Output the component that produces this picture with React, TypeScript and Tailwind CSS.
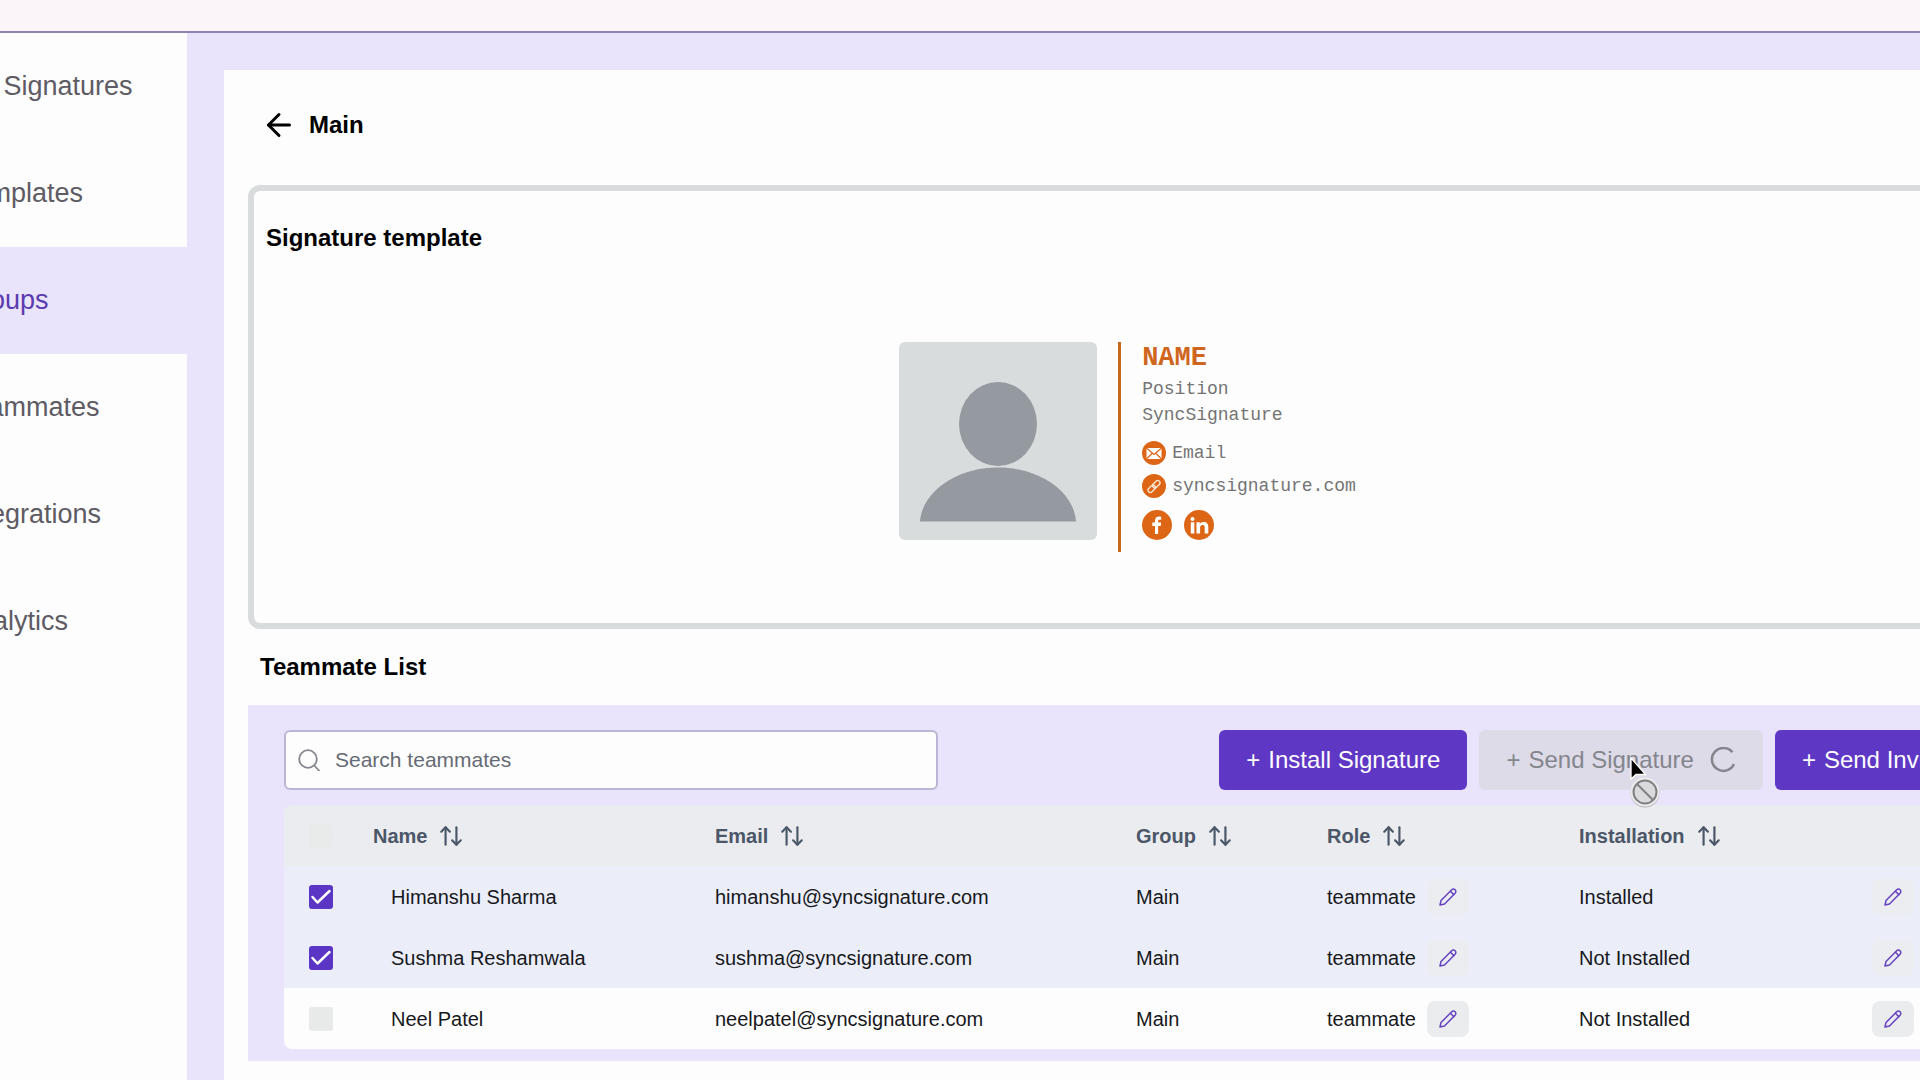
import { ArrowLeft, ArrowUpDown } from "lucide-react"

const navItems = [
  { name: "My Signatures", href: "#signatures", active: false },
  { name: "Templates", href: "#templates", active: false },
  { name: "Groups", href: "#groups", active: true },
  { name: "Teammates", href: "#teammates", active: false },
  { name: "Integrations", href: "#integrations", active: false },
  { name: "Analytics", href: "#analytics", active: false },
]

const columns = [
  { name: "Name", width: "w-[342px]" },
  { name: "Email", width: "w-[421px]" },
  { name: "Group", width: "w-[191px]" },
  { name: "Role", width: "w-[252px]" },
  { name: "Installation", width: "w-[293px]" },
]

const teammates = [
  { name: "Himanshu Sharma", email: "himanshu@syncsignature.com", group: "Main", role: "teammate", status: "Installed", selected: true },
  { name: "Sushma Reshamwala", email: "sushma@syncsignature.com", group: "Main", role: "teammate", status: "Not Installed", selected: true },
  { name: "Neel Patel", email: "neelpatel@syncsignature.com", group: "Main", role: "teammate", status: "Not Installed", selected: false },
]

function Sidebar() {
  return (
    <aside className="w-[187px] shrink-0 overflow-hidden bg-[#fdfdfd]">
      <nav className="-ml-10">
        {navItems.map((item) => (
          <a
            key={item.name}
            href={item.href}
            className={
              item.active
                ? "flex h-[107px] items-center whitespace-nowrap bg-[#e9e3fb] text-[27px] text-[#5b3bb0]"
                : "flex h-[107px] items-center whitespace-nowrap text-[27px] text-[#5e5b64]"
            }
          >
            {item.name}
          </a>
        ))}
      </nav>
    </aside>
  )
}

function Avatar() {
  return (
    <svg viewBox="0 0 198 198" className="size-[198px] shrink-0 rounded-md bg-[#d9dcdd]" aria-hidden="true">
      <ellipse cx="99" cy="82" rx="39" ry="42" fill="#9599a0" />
      <path d="M21 179.500C23 150 57 125.500 99 125.500s76 24.500 78 54z" fill="#9599a0" />
    </svg>
  )
}

function EmailIcon() {
  return (
    <svg viewBox="0 0 24 24" className="size-6" aria-hidden="true">
      <circle cx="12" cy="12" r="12" fill="#dc6516" />
      <rect x="4.500" y="7" width="15" height="11" rx="1.500" fill="#fff" />
      <path d="M5 7.500l7 6 7-6M5 17.500l5-5M19 17.500l-5-5" fill="none" stroke="#dc6516" strokeWidth="1.200" />
    </svg>
  )
}

function LinkIcon() {
  return (
    <svg viewBox="0 0 24 24" className="size-6" aria-hidden="true">
      <circle cx="12" cy="12" r="12" fill="#dc6516" />
      <g transform="rotate(-45 12 12.500)" fill="none" stroke="#ffe9d6" strokeWidth="1.300">
        <rect x="4.500" y="10.200" width="8.500" height="4.600" rx="2.300" />
        <rect x="11" y="10.200" width="8.500" height="4.600" rx="2.300" />
      </g>
    </svg>
  )
}

function SignatureCard() {
  return (
    <div className="flex items-start">
      <Avatar />
      <div className="ml-[21px] h-[210px] w-[3px] bg-[#c56a1d]" />
      <div className="ml-[21px] font-['Liberation_Mono',monospace] text-[18px] text-[#747474]">
        <p className="pt-[2px] text-[27px] leading-[28px] font-bold text-[#d0661d]">NAME</p>
        <p className="mt-1 leading-[26px]">Position</p>
        <p className="leading-[26px]">SyncSignature</p>
        <p className="mt-[13px] flex items-center gap-[6px] leading-[24px]">
          <EmailIcon />
          Email
        </p>
        <p className="mt-[9px] flex items-center gap-[6px] leading-[24px]">
          <LinkIcon />
          syncsignature.com
        </p>
        <div className="mt-3 flex gap-3">
          <a href="#facebook" aria-label="Facebook">
            <svg viewBox="0 0 30 30" className="size-[30px]">
              <circle cx="15" cy="15" r="15" fill="#dc6516" />
              <path d="M13 24v-8h-2.700v-3.400H13v-2.200C13 7.700 14.600 6.500 17 6.500c.9 0 1.700.1 2.200.2v3h-1.600c-1.100 0-1.500.6-1.500 1.400v1.500h3l-.4 3.400h-2.600v8z" fill="#fff" />
            </svg>
          </a>
          <a href="#linkedin" aria-label="LinkedIn">
            <svg viewBox="0 0 30 30" className="size-[30px]">
              <circle cx="15" cy="15" r="15" fill="#dc6516" />
              <circle cx="8.500" cy="9" r="2" fill="#fff" />
              <path d="M6.800 12.300h3.500V23.500H6.800zM12.500 12.300h3.300v1.600c.7-1.200 1.900-1.900 3.600-1.900 3.700 0 4.900 2.100 4.900 5.100v6.400h-3.600v-5.800c0-1.700-.4-2.700-2-2.700-1.800 0-2.600 1-2.600 2.700v5.800h-3.600z" fill="#fff" />
            </svg>
          </a>
        </div>
      </div>
    </div>
  )
}

function EditButton({ label, faded }: { label: string; faded: boolean }) {
  return (
    <button
      aria-label={label}
      className={
        faded
          ? "flex h-9 w-[42px] items-center justify-center rounded-lg bg-[#ecedf1]"
          : "flex h-9 w-[42px] items-center justify-center rounded-lg bg-[#ebecee]"
      }
    >
      <svg viewBox="0 0 18 18" className="size-[18px]" fill="none" stroke="#6544c0" strokeWidth="1.500" strokeLinecap="round" strokeLinejoin="round">
        <path d="M1 17l1-4.500L12.700 1.800a2.400 2.400 0 0 1 3.400 3.400L5.500 16z" />
        <path d="M11.400 3.200l3.400 3.400" />
      </svg>
    </button>
  )
}

function Checkbox({ label, checked }: { label: string; checked: boolean }) {
  return (
    <span className="relative block size-6">
      <input
        type="checkbox"
        aria-label={label}
        defaultChecked={checked}
        className="peer block size-6 appearance-none rounded-[3px] bg-[#e8e9e9] checked:bg-[#5b36c4]"
      />
      <svg
        viewBox="0 0 24 24"
        className="pointer-events-none absolute inset-0 hidden size-6 peer-checked:block"
        fill="none"
        stroke="#fff"
        strokeWidth="2.500"
        strokeLinecap="round"
        strokeLinejoin="round"
      >
        <path d="M3.500 12l5 5.500L20.500 6" />
      </svg>
    </span>
  )
}

function TeammateTable() {
  return (
    <table className="mt-[15px] w-full table-fixed overflow-hidden rounded-lg text-left text-[20px] text-[#17181c]">
      <thead className="bg-[#ebecef] text-[#4b5768]">
        <tr className="h-[61px]">
          <th className="w-[89px] pl-[25px]">
            <input type="checkbox" aria-label="Select all" className="block size-6 appearance-none rounded-[3px] bg-[#e9eaea]" />
          </th>
          {columns.map((column) => (
            <th key={column.name} className={column.width}>
              <button className="flex items-center gap-[11px] font-bold">
                {column.name}
                <ArrowUpDown size={26} strokeWidth={2} />
              </button>
            </th>
          ))}
          <th />
        </tr>
      </thead>
      <tbody>
        {teammates.map((mate) => (
          <tr key={mate.email} className={mate.selected ? "h-[61px] bg-[#ebeef8]" : "h-[61px] bg-[#fdfdfd]"}>
            <td className="pl-[25px]">
              <Checkbox label={mate.name} checked={mate.selected} />
            </td>
            <td className="pl-[18px]">{mate.name}</td>
            <td>{mate.email}</td>
            <td>{mate.group}</td>
            <td>
              <div className="flex items-center gap-[11px]">
                {mate.role}
                <EditButton label={"Edit role of " + mate.name} faded={mate.selected} />
              </div>
            </td>
            <td>{mate.status}</td>
            <td>
              <EditButton label={"Edit " + mate.name} faded={mate.selected} />
            </td>
          </tr>
        ))}
      </tbody>
    </table>
  )
}

// Arrow pointer with the "not allowed" badge
function BlockedCursor() {
  return (
    <svg viewBox="0 0 32 52" className="pointer-events-none absolute top-[27px] left-[150px] h-[52px] w-8" aria-hidden="true">
      <path d="M2 1v21l5-4.500h9.500z" fill="#000" stroke="#fff" strokeWidth="1.300" />
      <circle cx="16" cy="36" r="14.500" fill="#b5b5b8" />
      <circle cx="16" cy="35" r="14.500" fill="#ececec" />
      <circle cx="16" cy="35" r="11.500" fill="#dadadc" stroke="#808084" strokeWidth="2" />
      <path d="M8 27l16 16" stroke="#808084" strokeWidth="2" />
    </svg>
  )
}

function ActionButton({ label }: { label: string }) {
  return (
    <button className="flex h-[60px] items-center gap-2 rounded-md bg-[#5f37c5] px-[27px] text-[24px] text-[#fdfdfd]">
      <span>+</span>
      {label}
    </button>
  )
}

export default function App() {
  return (
    <div className="flex min-h-screen flex-col overflow-hidden bg-[#fdfdfd] font-['Liberation_Sans',Arial,sans-serif]">
      <header className="h-[33px] border-b-2 border-[#8f83b4] bg-[#fbf5fa]" />
      <div className="flex flex-1">
        <Sidebar />
        <div className="-mr-[147px] flex min-w-0 flex-1 bg-[#e9e3fb] pt-[37px] pr-9 pl-[37px]">
          <main className="min-w-0 flex-1 bg-[#fdfdfd] px-6">
            <div className="flex h-[109px] items-center gap-3 pl-[13px]">
              <button aria-label="Back">
                <ArrowLeft size={36} strokeWidth={2} />
              </button>
              <h1 className="text-[24px] font-bold">Main</h1>
            </div>

            <section className="mt-[6px] rounded-xl border-6 border-[#d9dcdd] px-3 pt-8 pb-[71px]">
              <h2 className="text-[24px] leading-[30px] font-bold">Signature template</h2>
              <div className="mt-[89px] flex justify-center">
                <SignatureCard />
              </div>
            </section>

            <h2 className="px-3 py-[23px] text-[24px] leading-[30px] font-bold">Teammate List</h2>

            <section className="bg-[#e9e3fb] px-9 pt-[25px] pb-3">
              <div className="flex items-center justify-between">
                <label className="flex h-[60px] w-[654px] items-center gap-[15px] rounded-md border-2 border-[#bcb5d6] bg-[#fdfdfd] pl-3">
                  <svg viewBox="0 0 22 22" className="size-[22px] shrink-0" fill="none" stroke="#85888f" strokeWidth="1.800" strokeLinecap="round">
                    <circle cx="10" cy="10" r="8.800" />
                    <path d="M16.200 16.500L21 21.500" />
                  </svg>
                  <input
                    type="text"
                    aria-label="Search teammates"
                    placeholder="Search teammates"
                    className="min-w-0 flex-1 bg-transparent text-[21px] outline-none placeholder:text-[#666b75]"
                  />
                </label>
                <div className="flex gap-3 whitespace-nowrap">
                  <ActionButton label="Install Signature" />
                  <div className="relative">
                    <button disabled className="flex h-[60px] items-center gap-2 rounded-md bg-[#dddbe7] px-[27px] text-[24px] text-[#85858d]">
                      <span>+</span>
                      Send Signature
                      <svg viewBox="0 0 26 26" className="ml-2 size-[26px]" fill="none" stroke="#85858d" strokeWidth="2.500">
                        <path d="M22.500 5.300A11.500 11.500 0 1 0 24 17" />
                      </svg>
                    </button>
                    <BlockedCursor />
                  </div>
                  <ActionButton label="Send Invite" />
                </div>
              </div>
              <TeammateTable />
            </section>
          </main>
        </div>
      </div>
    </div>
  )
}
